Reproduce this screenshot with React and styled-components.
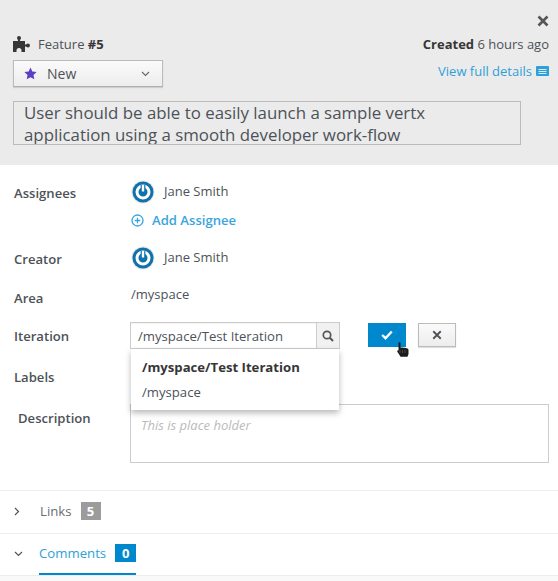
import React from "react";
import styled, { createGlobalStyle } from "styled-components";

const Global = createGlobalStyle`
  html, body { margin: 0; padding: 0; background: #fff; }
  body { font-family: "Open Sans", "Noto Sans", sans-serif; font-size: 13px; color: #363636; }
  #root { width: 558px; height: 581px; overflow: hidden; }
`;

const Page = styled.div`
  width: 558px; height: 581px; overflow: hidden; background: #fff;
  display: flex; flex-direction: column;
`;
const Header = styled.header`
  height: 165px; box-sizing: border-box; background: #ebebeb;
  padding: 15px 9px 0 13px; display: flex; flex-direction: column;
`;
const CloseRow = styled.div`
  display: flex; justify-content: flex-end; height: 14px;
`;
const TypeRow = styled.div`
  display: flex; justify-content: space-between; align-items: center;
  height: 20px; margin-top: 5px;
`;
const TypeLabel = styled.div`
  display: flex; align-items: center; gap: 8px; color: #4d5258;
  b { color: #363636; font-weight: 700; }
`;
const Created = styled.div`
  color: #4d5258; b { color: #363636; font-weight: 700; }
`;
const StateRow = styled.div`
  display: flex; justify-content: space-between; align-items: flex-start;
  margin-top: 6px;
`;
const StateSelect = styled.div`
  width: 150px; height: 27px; box-sizing: border-box;
  border: 1px solid #bbb; border-bottom-color: #b0b0b0;
  background: linear-gradient(#fafafa, #ededed);
  box-shadow: 0 1px 1px rgba(3,3,3,.12);
  display: flex; align-items: center; padding: 0 12px 0 10px; color: #4d5258; font-size: 14px;
  span { margin-left: 10px; flex: 1; }
`;
const DetailsLink = styled.a`
  color: #2f9fd8; font-size: 13px; display: flex; align-items: center; gap: 4px; margin-top: 2px;
`;
const TitleBox = styled.div`
  width: 508px; height: 44px; box-sizing: border-box; margin-top: 14px;
  border: 1px solid #bbb; padding: 0 10px; overflow: hidden;
  font-size: 16.85px; line-height: 22px; color: #4d5258;
`;
const Form = styled.div`
  padding: 14px 9px 0 14px; display: flex; flex-direction: column;
`;
const Row = styled.div`
  display: grid; grid-template-columns: 116px 1fr; min-height: ${p => p.$h}px;
  position: relative;
`;
const Label = styled.div`
  font-size: 13.1px; font-weight: 600; color: #4d5258; line-height: 20px;
  padding-top: ${p => p.$top || 0}px; padding-left: ${p => p.$left || 0}px;
`;
const Value = styled.div`
  display: flex; align-items: center; gap: 9px; color: #4d5258; font-size: 13px; height: 26px;
  padding-left: 1px;
  span { margin-bottom: 3px; }
`;
const AddLink = styled.a`
  display: flex; align-items: center; gap: 8px; color: #39a5dc; font-weight: 600; font-size: 13.1px;
  margin-top: 4px; height: 22px; padding-left: 1px;
`;
const Stack = styled.div`
  display: flex; flex-direction: column;
`;
const Plain = styled.div`
  color: #4d5258; font-size: 13px; line-height: 20px; padding-left: 1px;
`;
const Controls = styled.div`
  display: flex; align-items: flex-start; position: relative;
`;
const SearchBox = styled.div`
  width: 210px; height: 27px; margin-top: -1px; box-sizing: border-box; border: 1px solid #ccc; display: flex;
  box-shadow: inset 0 1px 1px rgba(3,3,3,.05); background: #fff;
`;
const SearchInput = styled.div`
  flex: 1; padding-left: 7px; line-height: 27px; color: #4d5258; font-size: 13.15px;
`;
const SearchBtn = styled.div`
  width: 22px; border-left: 1px solid #ccc; background: #f1f1f1;
  display: flex; align-items: center; justify-content: center;
`;
const ConfirmBtn = styled.div`
  width: 38px; height: 24px; margin-left: 28px; background: #0088ce; display: flex;
  align-items: center; justify-content: center;
`;
const CancelBtn = styled.div`
  width: 38px; height: 24px; margin-left: 12px; box-sizing: border-box; border: 1px solid #bbb;
  background: linear-gradient(#fafafa, #ededed); box-shadow: 0 1px 1px rgba(3,3,3,.12);
  display: flex; align-items: center; justify-content: center;
`;
const Dropdown = styled.div`
  position: absolute; left: 1px; top: 26px; width: 208px; height: 61px; box-sizing: border-box;
  background: #fff; box-shadow: 0 3px 6px rgba(3,3,3,.28); z-index: 3;
  padding: 8px 11px; display: flex; flex-direction: column; gap: 5px; font-size: 13.15px; color: #4d5258;
  b { font-weight: 700; color: #363636; }
  div { line-height: 20px; }
`;
const Cursor = styled.svg`
  position: absolute; left: 267px; top: 19px; z-index: 4;
`;
const TextArea = styled.div`
  height: 59px; width: 419px; box-sizing: border-box; border: 1px solid #ccc; padding: 10px;
  color: #bbb; font-style: italic; font-size: 13px; line-height: 20px;
`;
const Section = styled.div`
  height: ${p => p.$h}px; box-sizing: border-box; border-top: 1px solid #ededed;
  display: flex; align-items: flex-start; padding-left: 14px;
`;
const Caret = styled.div`
  width: ${p => p.$w}px; height: 40px; display: flex; align-items: center;
`;
const Tab = styled.div`
  display: flex; align-items: center; gap: 9px; height: 40px; color: ${p => p.$active ? "#2f9fd8" : "#6a6e73"};
  font-size: 13.2px; position: relative;
  ${p => p.$active && "border-bottom: 2px solid #0088ce; height: 41px; box-sizing: border-box; padding-bottom: 2px;"}
`;
const Count = styled.span`
  min-width: ${p => p.$blue ? 21 : 20}px; height: 18px; background: ${p => p.$blue ? "#0088ce" : "#9c9c9c"};
  color: #fff; font-weight: 700; font-size: 13px; text-align: center; line-height: 18px;
`;
const Footer = styled.div`
  flex: 1; background: #f9f9f9; border-top: 1px solid #ededed;
`;

const X = ({ s = 12, c = "#555", w = 2.6 }) => (
  <svg width={s} height={s} viewBox="0 0 12 12"><path d="M1.500 1.500l9 9M10.500 1.500l-9 9" stroke={c} strokeWidth={w} fill="none" /></svg>
);
const Avatar = () => (
  <svg width="24" height="24" viewBox="0 0 24 24">
    <circle cx="12" cy="12" r="11.500" fill="#e6e6e6" />
    <circle cx="12" cy="12" r="10.500" fill="#0f72ab" />
    <circle cx="12" cy="12" r="6" fill="none" stroke="#fff" strokeWidth="3" />
    <path d="M12 5v7.500" stroke="#0f72ab" strokeWidth="4.800" />
    <path d="M12 5v6.500" stroke="#fff" strokeWidth="2.400" />
  </svg>
);

export default function App() {
  return (
    <Page>
      <Global />
      <Header>
        <CloseRow><X s={12} /></CloseRow>
        <TypeRow>
          <TypeLabel>
            <svg width="17" height="16" viewBox="0 0 17 16" fill="#363636">
              <path d="M0 5h12v11H8.500v-1.500a2.500 2.500 0 0 0-5 0V16H0z" />
              <rect x="5" y="2" width="2" height="4" />
              <circle cx="6" cy="2" r="2" />
              <rect x="11" y="8.500" width="4" height="2" />
              <circle cx="15" cy="9.500" r="1.900" />
            </svg>
            <span>Feature <b>#5</b></span>
          </TypeLabel>
          <Created><b>Created</b> 6 hours ago</Created>
        </TypeRow>
        <StateRow>
          <StateSelect>
            <svg width="13" height="13" viewBox="0 0 24 24"><path fill="#5c3fc4" d="M12 1l3.400 7.300 7.900 1-5.800 5.500 1.500 7.900-7-3.900-7 3.900 1.500-7.900L.7 9.300l7.900-1z" /></svg>
            <span>New</span>
            <svg width="9" height="6" viewBox="0 0 9 6"><path d="M1 1l3.500 3.500L8 1" stroke="#666" strokeWidth="1.100" fill="none" /></svg>
          </StateSelect>
          <DetailsLink>
            View full details
            <svg width="13" height="10" viewBox="0 0 13 10">
              <rect width="13" height="10" rx="1" fill="#2f9fd8" />
              <path d="M2.500 3.500h8M2.500 5.500h8M2.500 7.500h8" stroke="#d5ecf7" />
            </svg>
          </DetailsLink>
        </StateRow>
        <TitleBox>User should be able to easily launch a sample vertx application using a smooth developer work-flow</TitleBox>
      </Header>
      <Form>
        <Row $h={66}>
          <Label $top={4}>Assignees</Label>
          <Stack>
            <Value><Avatar /> <span>Jane Smith</span></Value>
            <AddLink>
              <svg width="13" height="13" viewBox="0 0 13 13"><circle cx="6.500" cy="6.500" r="5.500" fill="none" stroke="#39a5dc" strokeWidth="1.300" /><path d="M3.800 6.500h5.400M6.500 3.800v5.400" stroke="#39a5dc" strokeWidth="1.300" /></svg>
              Add Assignee
            </AddLink>
          </Stack>
        </Row>
        <Row $h={39}>
          <Label $top={4}>Creator</Label>
          <Value><Avatar /> <span>Jane Smith</span></Value>
        </Row>
        <Row $h={39}>
          <Label $top={4}>Area</Label>
          <Plain>/myspace</Plain>
        </Row>
        <Row $h={43}>
          <Label $top={3}>Iteration</Label>
          <Controls>
            <SearchBox>
              <SearchInput>/myspace/Test Iteration</SearchInput>
              <SearchBtn>
                <svg width="12" height="12" viewBox="0 0 12 12"><circle cx="5" cy="5" r="3.700" fill="none" stroke="#555" strokeWidth="1.700" /><path d="M7.800 7.800L11 11" stroke="#555" strokeWidth="2" /></svg>
              </SearchBtn>
            </SearchBox>
            <ConfirmBtn>
              <svg width="12" height="10" viewBox="0 0 12 10"><path d="M1.200 5l3.300 3.200L10.800 1.500" stroke="#fff" strokeWidth="2.400" fill="none" /></svg>
            </ConfirmBtn>
            <CancelBtn><X s={10} c="#4d5258" w={2.200} /></CancelBtn>
            <Dropdown>
              <div><b>/myspace/Test Iteration</b></div>
              <div>/myspace</div>
            </Dropdown>
            <Cursor width="12" height="15" viewBox="0 0 12 15">
              <path d="M1.500 1c0-1 2-1 2 0v4.500c1 0 2 0 3 .3 1.500 0 3 .3 4 .7.800.4 1 1 1 2V12l-1 2.800H3.500L2.500 13 .3 9.800C0 9 .8 8 1.500 8.500z" fill="#1c1c1c" />
              <path d="M3 8v3M5.500 8v3M8 8v3" stroke="#666" strokeWidth=".6" />
            </Cursor>
          </Controls>
        </Row>
        <Row $h={38}>
          <Label $top={1}>Labels</Label>
        </Row>
        <Row $h={86}>
          <Label $top={4} $left={4}>Description</Label>
          <TextArea>This is place holder</TextArea>
        </Row>
      </Form>
      <Section $h={43}>
        <Caret $w={26}><svg width="6" height="9" viewBox="0 0 6 9"><path d="M1 1l3.500 3.500L1 8" stroke="#555" strokeWidth="1.200" fill="none" /></svg></Caret>
        <Tab>Links <Count>5</Count></Tab>
      </Section>
      <Section $h={42}>
        <Caret $w={25}><svg width="9" height="6" viewBox="0 0 9 6"><path d="M1 1l3.500 3.500L8 1" stroke="#555" strokeWidth="1.200" fill="none" /></svg></Caret>
        <Tab $active>Comments <Count $blue>0</Count></Tab>
      </Section>
      <Footer />
    </Page>
  );
}
